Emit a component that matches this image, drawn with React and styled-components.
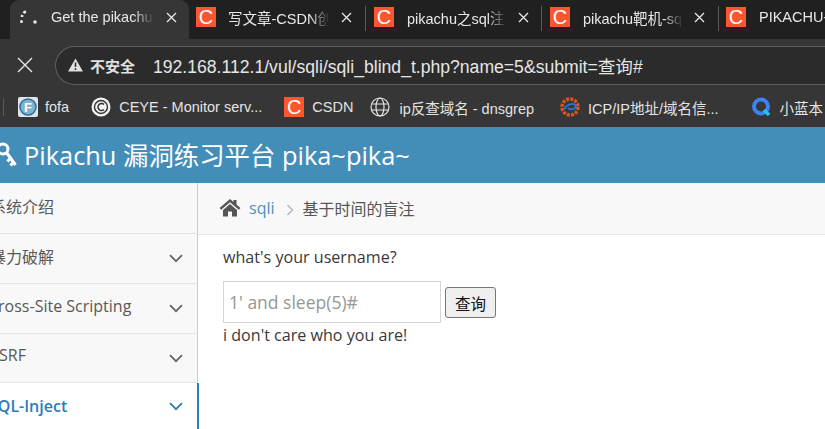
import React from 'react'
import styled, { createGlobalStyle } from 'styled-components'

const GlobalStyle = createGlobalStyle`
  html, body {
    margin: 0;
    padding: 0;
    background: white;
    overflow: hidden;
  }
`

const Page = styled.div`
  width: 825px;
  height: 429px;
  display: flex;
  flex-direction: column;
  overflow: hidden;
  font-family: 'Open Sans', 'Noto Sans CJK SC', sans-serif;
`

const TabStrip = styled.div`
  height: 39px;
  background: #202020;
  display: flex;
  padding-left: 10px;
  flex-shrink: 0;
  overflow: hidden;
`

const ActiveTab = styled.div`
  width: 179px;
  height: 39px;
  margin-right: -1px;
  padding: 0 0 5px 9px;
  background: #363636;
  border-radius: 9px 9px 0 0;
  display: flex;
  align-items: center;
  box-sizing: border-box;
  flex-shrink: 0;
`

const Tab = styled.div`
  width: ${p => p.$width}px;
  height: 34px;
  padding-left: ${p => p.$pad}px;
  display: flex;
  align-items: center;
  box-sizing: border-box;
  flex-shrink: 0;
  position: relative;
  &::after {
    content: '';
    display: ${p => (p.$last ? 'none' : 'block')};
    position: absolute;
    right: 0;
    top: 6px;
    width: 1px;
    height: 25px;
    background: #5a5a5a;
  }
`

const TabTitle = styled.span`
  width: ${p => p.$width}px;
  margin-left: ${p => p.$gap}px;
  color: #e8e8e8;
  font-family: 'Liberation Sans', 'Noto Sans CJK SC', sans-serif;
  font-size: 14.5px;
  white-space: nowrap;
  overflow: hidden;
  -webkit-mask-image: linear-gradient(to right, black 80%, transparent 100%);
  mask-image: linear-gradient(to right, black 80%, transparent 100%);
`

const CloseIcon = styled.svg`
  width: 11px;
  height: 11px;
  margin-left: ${p => p.$gap}px;
  flex-shrink: 0;
`

const Toolbar = styled.div`
  height: 46px;
  background: #363636;
  display: flex;
  align-items: center;
  flex-shrink: 0;
  box-sizing: border-box;
  padding: 6px 0 0 17px;
`

const Omnibox = styled.div`
  width: 800px;
  height: 39px;
  margin-left: 22px;
  box-sizing: border-box;
  border: 1px solid #5f5f5f;
  border-right: none;
  border-radius: 20px 0 0 20px;
  background: #2b2b2b;
  display: flex;
  align-items: center;
  padding-left: 12px;
  flex-shrink: 0;
`

const NotSecure = styled.span`
  margin-left: 7px;
  color: #e0e0e0;
  font-family: 'Noto Sans CJK SC', sans-serif;
  font-size: 15px;
  font-weight: 700;
`

const Url = styled.span`
  margin-left: 18px;
  color: #e6e6e6;
  font-family: 'Liberation Sans', 'Noto Sans CJK SC', sans-serif;
  font-size: 17.6px;
  white-space: nowrap;
`

const BookmarkBar = styled.div`
  height: 42px;
  background: #363636;
  display: flex;
  align-items: center;
  flex-shrink: 0;
  padding: 2px 0 0 3px;
  box-sizing: border-box;
  overflow: hidden;
`

const BarRule = styled.div`
  width: 1px;
  height: 18px;
  background: #5a5a5a;
  flex-shrink: 0;
`

const Bookmark = styled.div`
  display: flex;
  align-items: center;
  gap: ${p => p.$inner || 8}px;
  margin-left: ${p => p.$gap}px;
  color: #e4e4e4;
  font-family: 'Liberation Sans', 'Noto Sans CJK SC', sans-serif;
  font-size: 14.5px;
  white-space: nowrap;
  flex-shrink: 0;
`

const FaviconBox = styled.div`
  width: 20px;
  height: 20px;
  background: #fc5531;
  color: white;
  font-family: 'Liberation Sans', sans-serif;
  font-size: 20px;
  line-height: 20px;
  text-align: center;
  flex-shrink: 0;
`

const Icon = styled.svg`
  flex-shrink: 0;
  display: block;
`

const Navbar = styled.div`
  height: 56px;
  padding-bottom: 3px;
  box-sizing: border-box;
  background: #438eb9;
  display: flex;
  align-items: center;
  flex-shrink: 0;
  color: white;
  font-size: 25.4px;
  overflow: hidden;
`

const Brand = styled.span`
  margin-left: 7px;
  white-space: nowrap;
`

const Body = styled.div`
  flex: 1;
  display: flex;
  min-height: 0;
`

const Sidebar = styled.div`
  width: 198px;
  flex-shrink: 0;
  background: #f8f8f8;
`

const NavItem = styled.div`
  height: ${p => p.$height || 50}px;
  box-sizing: border-box;
  border-bottom: 1px solid #e5e5e5;
  border-right: 1px solid #cccccc;
  display: flex;
  align-items: center;
  justify-content: space-between;
  padding-right: 14px;
  color: #585858;
  font-size: 16px;
  white-space: nowrap;
  ${p => p.$active && `
    position: relative;
    background: white;
    color: #2b7dbc;
    font-weight: 600;
    border-bottom: none;
    border-right: 2px solid #2b7dbc;
    margin-right: -1px;
  `}
`

const NavLabel = styled.span`
  margin-left: ${p => p.$shift}px;
  margin-bottom: ${p => p.$lift}px;
`

const Main = styled.div`
  flex: 1;
  min-width: 0;
  display: flex;
  flex-direction: column;
`

const Breadcrumbs = styled.div`
  height: 52px;
  box-sizing: border-box;
  background: #f8f8f8;
  border-bottom: 1px solid #e5e5e5;
  display: flex;
  align-items: center;
  padding: 0 0 2px 21px;
  font-size: 16px;
  color: #555555;
  flex-shrink: 0;
`

const CrumbLink = styled.span`
  margin-left: 8px;
  color: #4c8fbd;
`

const CrumbSep = styled.svg`
  width: 8px;
  height: 12px;
  margin: 4px 9px 0 11px;
  flex-shrink: 0;
`

const Content = styled.div`
  padding: 11px 0 0 25px;
  color: #393939;
  font-size: 16.1px;
  line-height: 22px;
`

const QueryForm = styled.form`
  display: flex;
  align-items: flex-end;
  margin: 13px 0 0;
`

const NameInput = styled.input`
  width: 218px;
  height: 42px;
  box-sizing: border-box;
  border: 1px solid #d5d5d5;
  padding: 0 5px;
  font-family: 'Open Sans', sans-serif;
  font-size: 17.5px;
  color: #858585;
  &::placeholder {
    color: #969696;
    opacity: 1;
  }
`

const SubmitButton = styled.button`
  width: 51px;
  height: 31px;
  margin: 0 0 5px 4px;
  padding: 0;
  box-sizing: border-box;
  border: 1px solid #767676;
  border-radius: 3px;
  background: #efefef;
  color: #111111;
  font-family: 'Noto Sans CJK SC', sans-serif;
  font-size: 15.5px;
`

const Notice = styled.p`
  margin: 1px 0 0;
`

const Close = ({ gap }) => (
  <CloseIcon $gap={gap} viewBox="0 0 11 11">
    <path d="M1 1 L10 10 M10 1 L1 10" stroke="#e8e8e8" strokeWidth="1.3" fill="none" />
  </CloseIcon>
)

const CsdnLogo = () => <FaviconBox>C</FaviconBox>

const tabs = [
  { title: '写文章-CSDN创作中心', tabWidth: 178, pad: 8, gap: 12, width: 102 },
  { title: 'pikachu之sql注入', tabWidth: 176, pad: 8, gap: 13, width: 100 },
  { title: 'pikachu靶机-sql注入', tabWidth: 177, pad: 8, gap: 13, width: 100 },
  { title: 'PIKACHU-sql', tabWidth: 150, pad: 7, gap: 13, width: 120, last: true },
]

const sideItems = [
  { label: '系统介绍', shift: -10, lift: 4, height: 51 },
  { label: '暴力破解', shift: -10, lift: 6, arrow: true },
  { label: 'Cross-Site Scripting', shift: -12, lift: 6, arrow: true },
  { label: 'CSRF', shift: -11, lift: 6, arrow: true, height: 49 },
]

const Chevron = ({ color = '#666666' }) => (
  <Icon width="14" height="9" viewBox="0 0 14 9">
    <path d="M1 1.2 L7 7.2 L13 1.2" stroke={color} strokeWidth="1.8" fill="none" />
  </Icon>
)

export default function App() {
  return (
    <Page>
      <GlobalStyle />
      <TabStrip>
        <ActiveTab>
          <Icon width="22" height="16" viewBox="0 0 22 16">
            <path d="M7 2.5 A6 6 0 0 0 3 8" stroke="#e8e8e8" strokeWidth="2.6" fill="none" strokeDasharray="3 2" />
            <circle cx="2.5" cy="12.5" r="1.5" fill="#e8e8e8" />
            <circle cx="16" cy="13" r="1.8" fill="#e8e8e8" />
          </Icon>
          <TabTitle $gap={10} $width={103}>Get the pikachu</TabTitle>
          <Close gap={12} />
        </ActiveTab>
        {tabs.map(t => (
          <Tab key={t.title} $last={t.last} $width={t.tabWidth} $pad={t.pad}>
            <CsdnLogo />
            <TabTitle $gap={t.gap} $width={t.width}>{t.title}</TabTitle>
            {!t.last && <Close gap={11} />}
          </Tab>
        ))}
      </TabStrip>

      <Toolbar>
        <Icon width="16" height="16" viewBox="0 0 16 16">
          <path d="M1 1 L15 15 M15 1 L1 15" stroke="#e8e8e8" strokeWidth="1.4" fill="none" />
        </Icon>
        <Omnibox>
          <Icon width="15" height="14" viewBox="0 0 15 14">
            <path d="M7.5 0.5 L15 13.5 L0 13.5 Z" fill="#e0e0e0" />
            <path d="M7.5 4.5 L7.5 9 M7.5 10.2 L7.5 12" stroke="#2b2b2b" strokeWidth="1.5" />
          </Icon>
          <NotSecure>不安全</NotSecure>
          <Url>192.168.112.1/vul/sqli/sqli_blind_t.php?name=5&amp;submit=查询#</Url>
        </Omnibox>
      </Toolbar>

      <BookmarkBar>
        <BarRule />
        <Bookmark $gap={14} $inner={7}>
          <Icon width="20" height="20" viewBox="0 0 20 20">
            <rect width="20" height="20" rx="2" fill="#dfe6ea" />
            <circle cx="10" cy="10" r="8" fill="#7fb2cf" stroke="#2f6f96" strokeWidth="1.5" />
            <text x="10" y="15" textAnchor="middle" fontSize="13" fontWeight="700" fontFamily="Liberation Sans" fill="white">F</text>
          </Icon>
          fofa
        </Bookmark>
        <Bookmark $gap={22}>
          <Icon width="20" height="20" viewBox="0 0 20 20">
            <circle cx="10" cy="10" r="9.5" fill="#f2f2f2" />
            <circle cx="10" cy="10" r="6.5" fill="none" stroke="#333" strokeWidth="1.4" />
            <path d="M13 7.5 A3.5 3.5 0 1 0 13 12.5" fill="none" stroke="#333" strokeWidth="1.6" />
          </Icon>
          CEYE - Monitor serv...
        </Bookmark>
        <Bookmark $gap={22}>
          <CsdnLogo />
          CSDN
        </Bookmark>
        <Bookmark $gap={17} $inner={9}>
          <Icon width="20" height="20" viewBox="0 0 20 20" fill="none" stroke="#e4e4e4" strokeWidth="1.2">
            <circle cx="10" cy="10" r="9" />
            <ellipse cx="10" cy="10" rx="4" ry="9" />
            <path d="M1.5 7 H18.5 M1.5 13 H18.5" />
          </Icon>
          ip反查域名 - dnsgrep
        </Bookmark>
        <Bookmark $gap={26}>
          <Icon width="20" height="20" viewBox="0 0 20 20">
            <circle cx="10" cy="10" r="8" fill="none" stroke="#d9541e" strokeWidth="3.5" strokeDasharray="3 1.2" />
            <path d="M4 12 C8 6 15 6 16 9 C15 13 10 13 8 11" fill="none" stroke="#2c74c9" strokeWidth="2" />
          </Icon>
          ICP/IP地址/域名信...
        </Bookmark>
        <Bookmark $gap={32} $inner={9}>
          <Icon width="20" height="20" viewBox="0 0 20 20">
            <circle cx="10" cy="9.5" r="7" fill="none" stroke="#3b82f6" strokeWidth="4" />
            <path d="M13 13 L18 18" stroke="#25c2e8" strokeWidth="3.5" />
          </Icon>
          小蓝本
        </Bookmark>
      </BookmarkBar>

      <Navbar>
        <Icon width="17" height="26" viewBox="0 0 17 26">
          <circle cx="3" cy="8" r="5" fill="none" stroke="white" strokeWidth="3" />
          <path d="M6.5 11.5 L15.5 24 M10.5 17 L7.5 20.5 M13.5 21 L10.5 24.5" stroke="white" strokeWidth="3" fill="none" />
        </Icon>
        <Brand>Pikachu 漏洞练习平台 pika~pika~</Brand>
      </Navbar>

      <Body>
        <Sidebar>
          {sideItems.map(item => (
            <NavItem key={item.label} $height={item.height}>
              <NavLabel $shift={item.shift} $lift={item.lift}>{item.label}</NavLabel>
              {item.arrow && <Chevron />}
            </NavItem>
          ))}
          <NavItem $active $height={47}>
            <NavLabel $shift={-11} $lift={2}>SQL-Inject</NavLabel>
            <Chevron color="#2b7dbc" />
          </NavItem>
        </Sidebar>
        <Main>
          <Breadcrumbs>
            <Icon width="22" height="19" viewBox="0 0 22 19">
              <path d="M11 1 L0.5 10 L2.2 11.8 L11 4.2 L19.8 11.8 L21.5 10 L17.5 6.6 V2 H14.5 V4 Z" fill="#555555" />
              <path d="M4 12 L11 6 L18 12 V18.5 H13 V13.5 H9 V18.5 H4 Z" fill="#555555" />
            </Icon>
            <CrumbLink>sqli</CrumbLink>
            <CrumbSep viewBox="0 0 8 12">
              <path d="M1.5 1 L6.5 6 L1.5 11" stroke="#b2b6bf" strokeWidth="1.4" fill="none" />
            </CrumbSep>
            基于时间的盲注
          </Breadcrumbs>
          <Content>
            what's your username?
            <QueryForm onSubmit={e => e.preventDefault()}>
              <NameInput placeholder="1' and sleep(5)#" />
              <SubmitButton type="button">查询</SubmitButton>
            </QueryForm>
            <Notice>i don't care who you are!</Notice>
          </Content>
        </Main>
      </Body>
    </Page>
  )
}
